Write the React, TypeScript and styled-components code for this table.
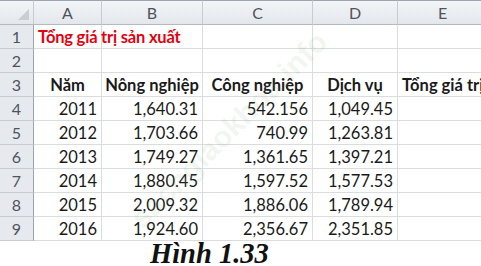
import React from "react";
import styled, { createGlobalStyle } from "styled-components";

const Global = createGlobalStyle`
  html, body { margin: 0; padding: 0; background: #fff; overflow: hidden; }
  body { width: 481px; height: 266px; }
`;

const Page = styled.div`
  position: relative;
  width: 481px;
  height: 266px;
  overflow: hidden;
  background: #fff;
  display: flex;
  flex-direction: column;
`;

const Grid = styled.div`
  display: grid;
  grid-template-columns: 34px 68px 101px 110px 85px 1fr;
  grid-template-rows: 25px repeat(9, 24px);
  font-family: Lato, "Noto Sans", sans-serif;
  font-size: 16.5px;
  color: #1a1a1a;
`;

const ColHead = styled.div`
  background: linear-gradient(#f3f5f7, #e3e7ec);
  border-top: 1px solid #9ea4ab;
  border-right: 1px solid #c8ccd2;
  border-bottom: 1px solid #b5bac1;
  display: flex;
  align-items: center;
  justify-content: center;
  color: #4f545b;
  font-size: 16px;
  box-sizing: border-box;
`;

const Corner = styled(ColHead)`
  position: relative;
  &::after {
    content: "";
    position: absolute;
    right: 4px;
    bottom: 4px;
    width: 0;
    height: 0;
    border-left: 11px solid transparent;
    border-bottom: 11px solid #c9ced4;
  }
`;

const RowHead = styled.div`
  background: #e6e9ee;
  border-right: 1px solid #9ea4ab;
  border-bottom: 1px solid #c8ccd2;
  display: flex;
  align-items: center;
  justify-content: center;
  color: #4f545b;
  font-size: 16px;
  box-sizing: border-box;
`;

const Cell = styled.div<{ $align?: "left" | "right" | "center"; $bold?: boolean }>`
  border-right: 1px solid #dadcdd;
  border-bottom: 1px solid #dadcdd;
  box-sizing: border-box;
  display: flex;
  align-items: center;
  justify-content: ${(p) =>
    p.$align === "right" ? "flex-end" : p.$align === "center" ? "center" : "flex-start"};
  padding: 0 4px;
  white-space: nowrap;
  overflow: visible;
  font-weight: ${(p) => (p.$bold ? 700 : 400)};
  color: #1a1a1a;
`;

const TitleCell = styled(Cell)`
  color: #e4000f;
  font-weight: 700;
  letter-spacing: -0.2px;
  position: relative;
  z-index: 1;
`;

const Caption = styled.div`
  font-family: "Liberation Serif", "Times New Roman", serif;
  font-weight: 700;
  font-style: italic;
  font-size: 28.5px;
  line-height: 25px;
  height: 25px;
  padding-left: 150px;
  color: #111;
`;

const Watermark = styled.div`
  position: absolute;
  left: 136px;
  top: 208px;
  transform: rotate(-45deg);
  transform-origin: left center;
  font-family: "Liberation Sans", sans-serif;
  font-weight: 700;
  font-size: 30px;
  line-height: 30px;
  color: rgba(110, 165, 110, 0.1);
  pointer-events: none;
  white-space: nowrap;
`;

const data: [string, string, string, string][] = [
  ["2011", "1,640.31", "542.156", "1,049.45"],
  ["2012", "1,703.66", "740.99", "1,263.81"],
  ["2013", "1,749.27", "1,361.65", "1,397.21"],
  ["2014", "1,880.45", "1,597.52", "1,577.53"],
  ["2015", "2,009.32", "1,886.06", "1,789.94"],
  ["2016", "1,924.60", "2,356.67", "2,351.85"],
];

export default function App() {
  return (
    <Page>
      <Global />
      <Grid>
        <Corner />
        {["A", "B", "C", "D", "E"].map((c) => (
          <ColHead key={c}>{c}</ColHead>
        ))}

        <RowHead>1</RowHead>
        <TitleCell>Tổng giá trị sản xuất</TitleCell>
        <Cell />
        <Cell />
        <Cell />
        <Cell />

        <RowHead>2</RowHead>
        <Cell />
        <Cell />
        <Cell />
        <Cell />
        <Cell />

        <RowHead>3</RowHead>
        <Cell $bold $align="center">Năm</Cell>
        <Cell $bold $align="center">Nông nghiệp</Cell>
        <Cell $bold $align="center">Công nghiệp</Cell>
        <Cell $bold $align="center">Dịch vụ</Cell>
        <Cell $bold>Tổng giá trị</Cell>

        {data.map((r, i) => (
          <React.Fragment key={r[0]}>
            <RowHead>{i + 4}</RowHead>
            <Cell $align="right">{r[0]}</Cell>
            <Cell $align="right">{r[1]}</Cell>
            <Cell $align="right">{r[2]}</Cell>
            <Cell $align="right">{r[3]}</Cell>
            <Cell />
          </React.Fragment>
        ))}
      </Grid>
      <Caption>Hình 1.33</Caption>
      <Watermark>sachgiaokhoa.info</Watermark>
    </Page>
  );
}
